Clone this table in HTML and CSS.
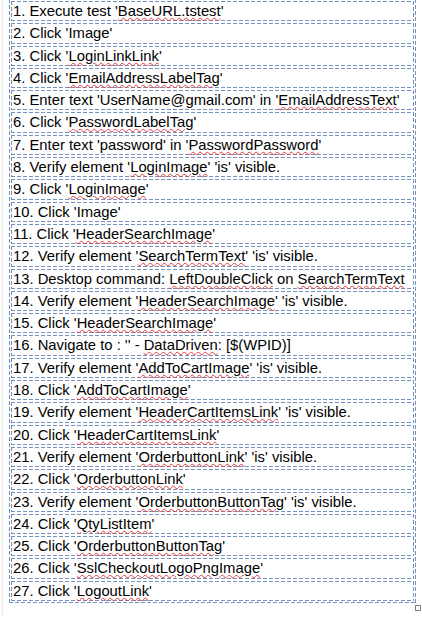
FILE: index.html
```html
<!DOCTYPE html>
<html>
<head>
<meta charset="utf-8">
<link rel="stylesheet" href="styles.css">
</head>
<body>
<div class="page">
  <div class="steps">
    <div class="row">1. Execute test '<span class="sp">BaseURL.tstest</span>'</div>
    <div class="row">2. Click 'Image'</div>
    <div class="row">3. Click '<span class="sp">LoginLinkLink</span>'</div>
    <div class="row">4. Click '<span class="sp">EmailAddressLabelTag</span>'</div>
    <div class="row">5. Enter text 'UserName@gmail.com' in '<span class="sp">EmailAddressText</span>'</div>
    <div class="row">6. Click '<span class="sp">PasswordLabelTag</span>'</div>
    <div class="row">7. Enter text 'password' in '<span class="sp">PasswordPassword</span>'</div>
    <div class="row">8. Verify element '<span class="sp">LoginImage</span>' 'is' visible.</div>
    <div class="row">9. Click '<span class="sp">LoginImage</span>'</div>
    <div class="row">10. Click 'Image'</div>
    <div class="row">11. Click '<span class="sp">HeaderSearchImage</span>'</div>
    <div class="row">12. Verify element '<span class="sp">SearchTermText</span>' 'is' visible.</div>
    <div class="row">13. Desktop command: <span class="sp">LeftDoubleClick</span> on <span class="sp">SearchTermText</span></div>
    <div class="row">14. Verify element '<span class="sp">HeaderSearchImage</span>' 'is' visible.</div>
    <div class="row">15. Click '<span class="sp">HeaderSearchImage</span>'</div>
    <div class="row">16. Navigate to : '' - <span class="sp">DataDriven</span>: [$(WPID)]</div>
    <div class="row">17. Verify element '<span class="sp">AddToCartImage</span>' 'is' visible.</div>
    <div class="row">18. Click '<span class="sp">AddToCartImage</span>'</div>
    <div class="row">19. Verify element '<span class="sp">HeaderCartItemsLink</span>' 'is' visible.</div>
    <div class="row">20. Click '<span class="sp">HeaderCartItemsLink</span>'</div>
    <div class="row">21. Verify element '<span class="sp">OrderbuttonLink</span>' 'is' visible.</div>
    <div class="row">22. Click '<span class="sp">OrderbuttonLink</span>'</div>
    <div class="row">23. Verify element '<span class="sp">OrderbuttonButtonTag</span>' 'is' visible.</div>
    <div class="row">24. Click '<span class="sp">QtyListItem</span>'</div>
    <div class="row">25. Click '<span class="sp">OrderbuttonButtonTag</span>'</div>
    <div class="row">26. Click '<span class="sp">SslCheckoutLogoPngImage</span>'</div>
    <div class="row">27. Click '<span class="sp">LogoutLink</span>'</div>
  </div>
  <div class="handle"></div>
</div>
</body>
</html>
```

FILE: styles.css
```css
html, body {
  margin: 0;
  padding: 0;
  background: #ffffff;
}

.page {
  position: relative;
  margin: -1px 0 0 2px;
  padding: 0 0 12px 6px;
  border-left: 1px dotted #d4d4d4;
  width: 420px;
  box-sizing: border-box;
}

.steps {
  --bc: #7591bd;
  width: 407px;
  box-sizing: border-box;
  padding: 2px;
  display: flex;
  flex-direction: column;
  gap: 2px;
  background:
    repeating-linear-gradient(90deg, var(--bc) 0 4px, transparent 4px 6px) top left / 100% 1px no-repeat,
    repeating-linear-gradient(90deg, var(--bc) 0 4px, transparent 4px 6px) bottom left / 100% 1px no-repeat,
    repeating-linear-gradient(180deg, var(--bc) 0 4px, transparent 4px 6px) top left / 1px 100% no-repeat,
    repeating-linear-gradient(180deg, var(--bc) 0 4px, transparent 4px 6px) top right / 1px 100% no-repeat;
}

.row {
  height: 20.3px;
  box-sizing: border-box;
  padding: 0 0 0 2px;
  font-family: "Liberation Sans", Arial, sans-serif;
  font-size: 14.8px;
  line-height: 20px;
  color: #000000;
  white-space: pre;
  overflow: hidden;
  background:
    repeating-linear-gradient(90deg, var(--bc) 0 4px, transparent 4px 6px) top left / 100% 1px no-repeat,
    repeating-linear-gradient(90deg, var(--bc) 0 4px, transparent 4px 6px) bottom left / 100% 1px no-repeat,
    repeating-linear-gradient(180deg, var(--bc) 0 4px, transparent 4px 6px) top left / 1px 100% no-repeat,
    repeating-linear-gradient(180deg, var(--bc) 0 4px, transparent 4px 6px) top right / 1px 100% no-repeat;
}

.sp {
  text-decoration: underline wavy #e23a3a;
  text-decoration-thickness: 1px;
  text-underline-offset: 1px;
}

.handle {
  position: absolute;
  left: 412px;
  top: 606px;
  width: 4px;
  height: 4px;
  border: 1px solid #808080;
}
```
